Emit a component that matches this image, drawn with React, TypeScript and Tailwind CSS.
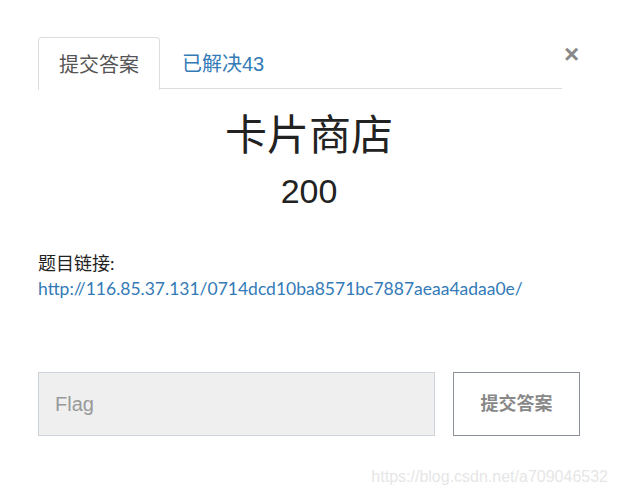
import React from "react";

const cjk = "font-['Liberation_Sans','Noto_Sans_CJK_SC',sans-serif]";
const lato = "font-['Lato','Noto_Sans_CJK_SC',sans-serif]";

export default function App() {
  return (
    <div className={`w-[618px] h-[495px] bg-white relative overflow-hidden ${cjk}`}>
      <div className="pl-[38px] pr-[38px] pt-[37px]">
        <div className="flex items-start">
          <div className="flex w-[525px] border-b border-[#dddddd] h-[52px]">
            <div className="w-[122px] h-[53px] border border-b-0 border-[#dddddd] rounded-t-[4px] bg-white flex items-center justify-center text-[20px] text-[#555555] pt-[2px]">
              提交答案
            </div>
            <div className="pl-[22px] flex items-center text-[20px] text-[#337ab7] pt-[2px]">
              已解决43
            </div>
          </div>
          <div className="ml-[2px] mt-[5px] w-[16px] text-[26px] leading-[24px] font-bold text-[#888888]">×</div>
        </div>
        <div className="flex flex-col items-center">
          <div className="mt-[22px] text-[42px] leading-[50px] text-[#222222]">卡片商店</div>
          <div className="mt-[10px] text-[34px] leading-[40px] text-[#222222]">200</div>
        </div>
        <div className={`mt-[40px] ${lato} text-[18px] leading-[25px] text-[#222222]`}>题目链接:</div>
        <div className={`${lato} text-[17.5px] leading-[25px] text-[#337ab7]`}>
          http://116.85.37.131/0714dcd10ba8571bc7887aeaa4adaa0e/
        </div>
        <div className="mt-[71px] flex gap-[18px]">
          <div className="w-[397px] h-[64px] bg-[#efefef] border border-[#cdd3da] flex items-center pl-[16px] text-[20px] text-[#999999]">
            Flag
          </div>
          <div className="w-[127px] h-[64px] border border-[#8a9098] flex items-center justify-center text-[18px] font-bold text-[#888888]">
            提交答案
          </div>
        </div>
      </div>
      <div className="absolute right-[10px] top-[465px] text-[16px] text-[#e6e6e6] font-['Liberation_Sans',sans-serif]">
        https://blog.csdn.net/a709046532
      </div>
    </div>
  );
}
